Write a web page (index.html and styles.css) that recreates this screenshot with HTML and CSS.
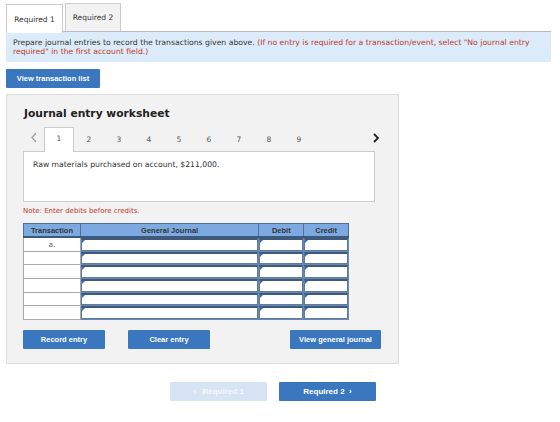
FILE: index.html
```html
<!DOCTYPE html>
<html lang="en">
  <head>
    <meta charset="UTF-8" />
    <title>Journal entry worksheet</title>
    <link rel="stylesheet" href="styles.css">
  </head>
  <body>
    <div class="page">
      <nav class="tabs">
        <a class="tab active">Required 1</a>
        <a class="tab">Required 2</a>
      </nav>
      <div class="info">
        <p>Prepare journal entries to record the transactions given above. <span class="warn">(If no entry is required for a transaction/event, select "No journal entry</span> <span class="warn">required" in the first account field.)</span></p>
      </div>

      <button class="btn btn-list">View transaction list</button>

      <section class="worksheet">
        <h2>Journal entry worksheet</h2>
        <div class="pager">
          <span class="arrow prev">
            <svg width="8" height="11" viewBox="0 0 8 11"><polyline points="6,1 2,5.5 6,10" fill="none" stroke="#a0a0a0" stroke-width="1.3"/></svg>
          </span>
          <span class="num current">1</span>
          <span class="num">2</span>
          <span class="num">3</span>
          <span class="num">4</span>
          <span class="num">5</span>
          <span class="num">6</span>
          <span class="num">7</span>
          <span class="num">8</span>
          <span class="num">9</span>
          <span class="arrow next">
            <svg width="8" height="10" viewBox="0 0 8 10"><polyline points="2,1 6,5 2,9" fill="none" stroke="#222" stroke-width="1.8"/></svg>
          </span>
        </div>
        <div class="description">Raw materials purchased on account, $211,000.</div>
        <p class="note">Note: Enter debits before credits.</p>

        <table class="journal">
          <thead>
            <tr>
              <th class="c-trans">Transaction</th>
              <th class="c-acct">General Journal</th>
              <th class="c-amt">Debit</th>
              <th class="c-amt">Credit</th>
            </tr>
          </thead>
          <tbody id="rows"></tbody>
        </table>

        <div class="actions">
          <button class="btn">Record entry</button>
          <button class="btn">Clear entry</button>
          <button class="btn btn-wide">View general journal</button>
        </div>
      </section>

      <div class="steps">
        <button class="btn step disabled">&lsaquo;&nbsp;&nbsp; Required 1</button>
        <button class="btn step">Required 2 &nbsp;&rsaquo;</button>
      </div>
    </div>

    <script>
      // six blank journal lines, only the first one is labelled
      const body = document.getElementById("rows");
      for (let i = 0; i < 6; i++) {
        const row = document.createElement("tr");
        const trans = document.createElement("td");
        trans.className = "c-trans";
        trans.textContent = i === 0 ? "a." : "";
        row.appendChild(trans);
        ["c-acct", "c-amt", "c-amt"].forEach((cls) => {
          const cell = document.createElement("td");
          cell.className = cls;
          const field = document.createElement("div");
          field.className = "field";
          cell.appendChild(field);
          row.appendChild(cell);
        });
        body.appendChild(row);
      }
    </script>
  </body>
</html>
```

FILE: styles.css
```css
body {
  margin: 0;
  font-family: "DejaVu Sans", Verdana, sans-serif;
  color: #333;
  background: #fff;
}
.page {
  padding: 3px 9px 0 6px;
}
.tabs {
  display: flex;
  gap: 2px;
  height: 28px;
}
.tab {
  display: flex;
  align-items: center;
  justify-content: center;
  width: 54px;
  font-size: 7.5px;
  color: #333;
  background: #f2f2f2;
  border: 1px solid #ccc;
  border-bottom: none;
}
.tab.active {
  width: 55px;
  background: #fff;
  position: relative;
  top: 1px;
  height: 28px;
}
.info {
  border-top: 1px solid #bbb;
  background: #dcebf9;
  padding: 6px 7px 6px;
  font-size: 7.7px;
  line-height: 9px;
  color: #333;
}
.info p {
  margin: 0;
}
.warn {
  color: #c0392b;
}
.btn {
  border: none;
  background: #3a77be;
  color: #fff;
  font-family: "Liberation Sans", Arial, sans-serif;
  font-weight: bold;
  font-size: 7.5px;
  height: 19px;
  width: 82px;
  padding: 0;
  border-radius: 1px;
}
.btn-list {
  display: block;
  margin-top: 7px;
  width: 94px;
}
.worksheet {
  margin-top: 6px;
  width: 374px;
  background: #f2f2f2;
  border: 1px solid #ddd;
  padding: 12px 1px 14px 16px;
}
.worksheet h2 {
  margin: 0 0 7px 1px;
  font-size: 10.7px;
  font-weight: bold;
  color: #222;
}
.pager {
  display: flex;
  align-items: center;
  height: 24px;
  font-size: 7.5px;
  color: #555;
}
.pager .num {
  width: 30px;
  text-align: center;
}
.pager .current {
  height: 25px;
  line-height: 21px;
  box-sizing: border-box;
  background: #fff;
  border: 1px solid #ccc;
  border-bottom: none;
  margin-bottom: -1px;
  position: relative;
  z-index: 1;
}
.arrow {
  display: flex;
  width: 21px;
  justify-content: center;
  padding-bottom: 3px;
}
.next {
  margin-left: 51px;
}
.description {
  background: #fff;
  border: 1px solid #ccc;
  height: 49px;
  width: 350px;
  font-size: 7.7px;
  line-height: 26px;
  text-indent: 9px;
}
.note {
  margin: 5px 0 8px;
  font-size: 7px;
  color: #c0392b;
}
.journal {
  border-collapse: collapse;
  width: 326px;
  font-size: 7.5px;
}
.journal th {
  background: #7caae0;
  color: #333;
  font-family: "Liberation Sans", Arial, sans-serif;
  font-weight: bold;
  height: 12px;
  padding: 0;
  border: 1px solid #4d6f98;
  border-bottom: 2px solid #3d5a7d;
}
.journal td {
  padding: 0;
  border: 1px solid #a8a8a8;
  background: #fff;
  text-align: center;
  color: #666;
}
.c-trans {
  width: 56px;
}
.c-acct {
  width: 179px;
}
.c-amt {
  width: 44px;
}
.journal td.c-acct,
.journal td.c-amt {
  border-color: #6a88ab;
  background: #dfe7f1;
}
.field {
  position: relative;
  height: 9.7px;
  background: #fff;
  border: 1px solid #5c7ca3;
  border-top: 2px solid #3d5a7d;
}
.field::before {
  content: "";
  position: absolute;
  left: 0;
  top: 0;
  border-left: 3px solid #2d6fcb;
  border-bottom: 3px solid transparent;
}
.actions {
  display: flex;
  align-items: center;
  margin-top: 10px;
}
.actions .btn + .btn {
  margin-left: 23px;
}
.actions .btn-wide {
  width: 91px;
  margin-left: 80px !important;
}
.steps {
  display: flex;
  gap: 12px;
  margin-top: 18px;
  padding-left: 164px;
}
.step {
  width: 97px;
  font-size: 8px;
}
.step.disabled {
  background: #d7e4f3;
  color: #f4f8fc;
}
```
